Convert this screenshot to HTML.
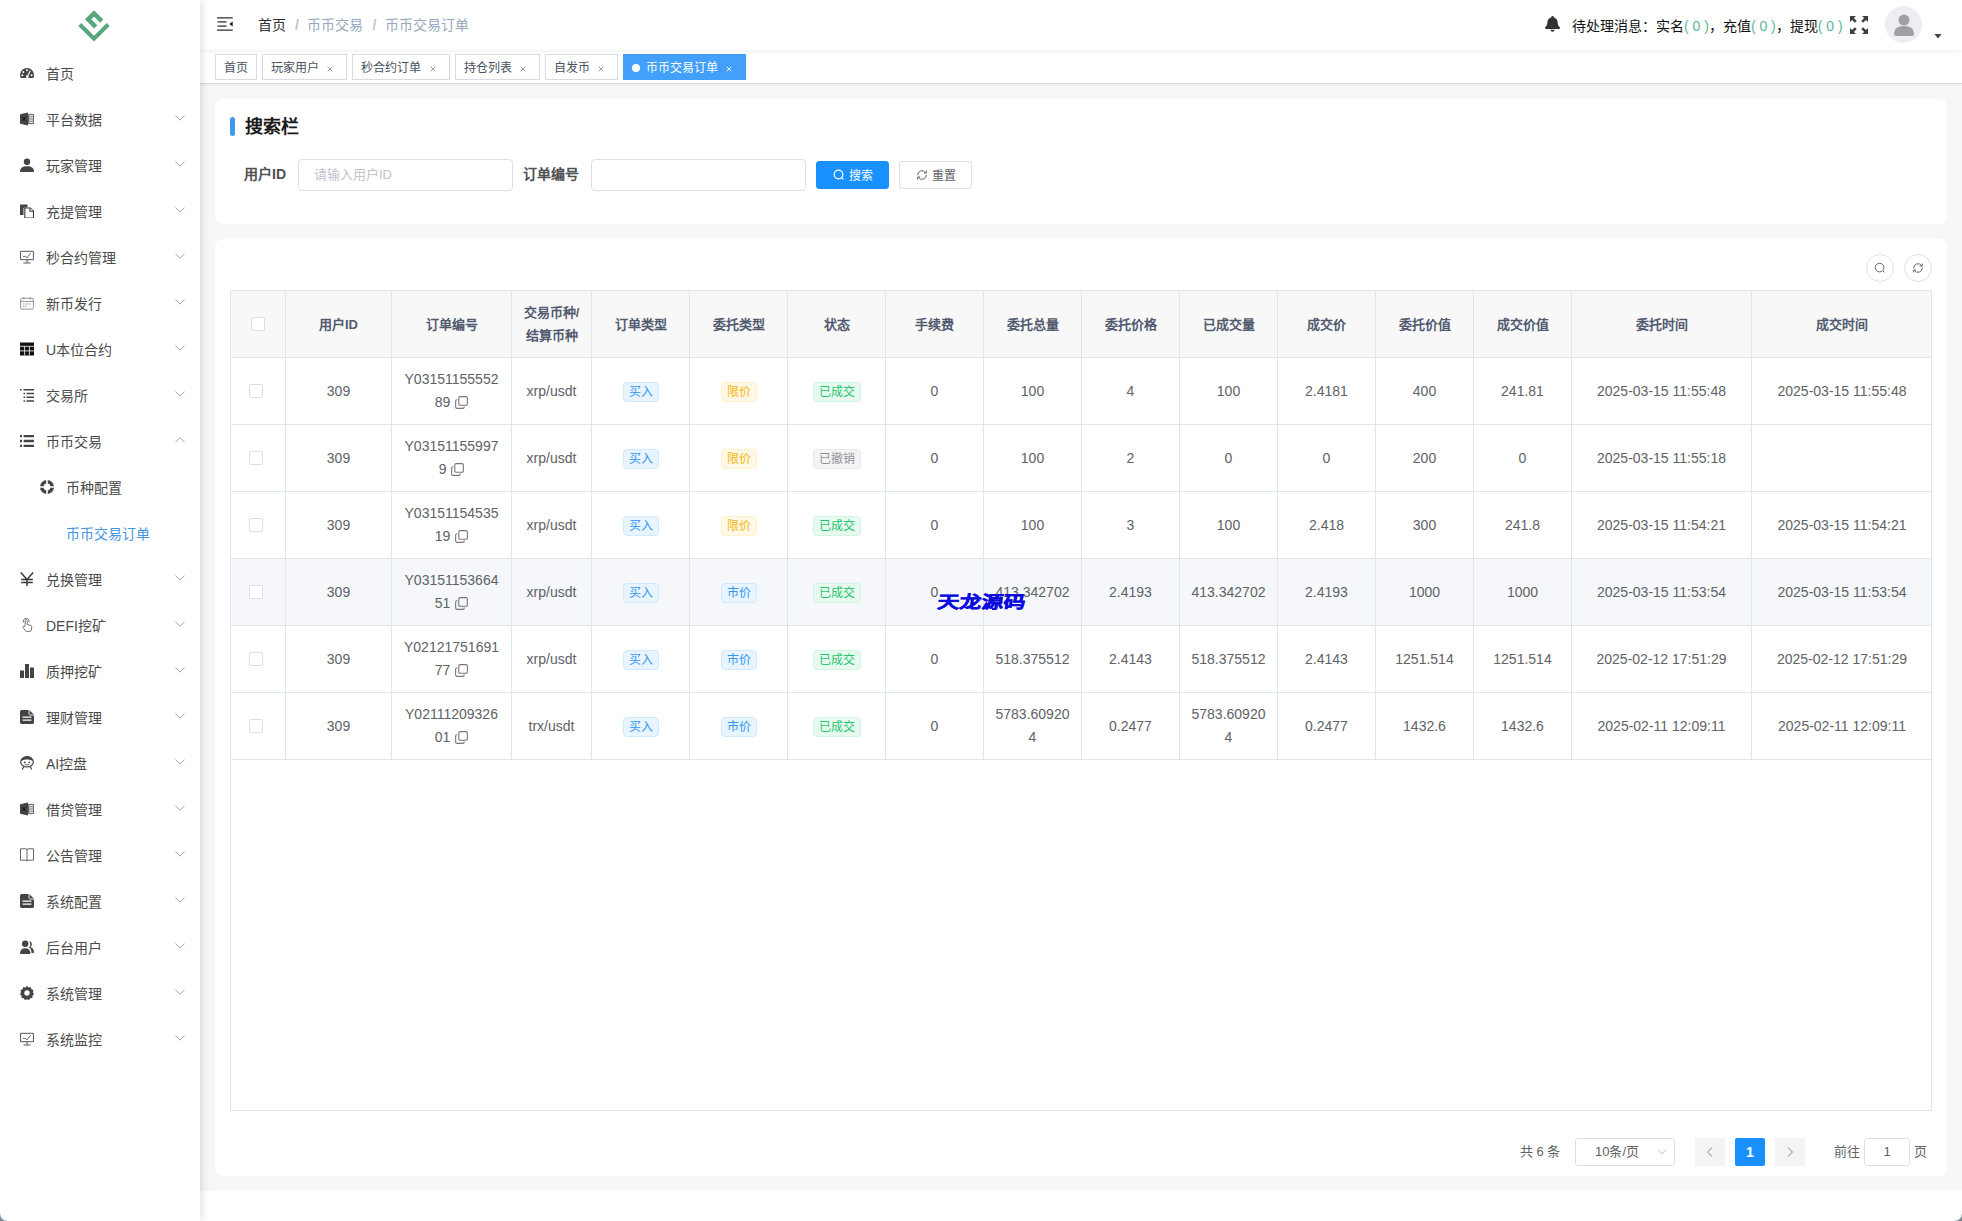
<!DOCTYPE html>
<html lang="zh-CN"><head><meta charset="utf-8"><title>币币交易订单</title>
<style>
*{box-sizing:border-box;margin:0;padding:0}
html,body{width:1962px;height:1221px;overflow:hidden;background:#fff;font-family:"Liberation Sans",sans-serif;font-size:14px;color:#606266}
.abs{position:absolute}
#side{position:absolute;left:0;top:0;width:200px;height:1221px;background:#fff;box-shadow:2px 0 8px rgba(0,21,41,.13);z-index:5}
#logo{position:absolute;left:70px;top:0;width:50px;height:50px}
.mi{position:absolute;left:0;width:200px;height:46px;line-height:46px;color:#4a4a4a;font-size:14px}
.mi svg.ic{position:absolute;left:20px;top:16px;width:14px;height:14px;fill:#444}
.mi span{position:absolute;left:46px;top:1px;white-space:nowrap}
.mi svg.ar{position:absolute;left:175px;top:18px;width:10px;height:8px;fill:none;stroke:#9da1a8;stroke-width:1}
.mi.sub svg.ic{left:40px}
.mi.sub span{left:66px}
#main{position:absolute;left:200px;top:0;width:1762px;height:1191px;background:#f7f7f7}
#nav{position:absolute;left:0;top:0;width:1762px;height:50px;background:#fff;box-shadow:0 1px 4px rgba(0,21,41,.08);z-index:2}
#nav .g{color:#5bb79a}
#tags{position:absolute;left:0;top:50px;width:1762px;height:34px;background:#fff;border-bottom:1px solid #d8dce5;box-shadow:0 1px 2px 0 rgba(0,0,0,.05)}
.tag{position:absolute;top:4px;height:26px;line-height:26px;border:1px solid #d8dce5;background:#fff;color:#495060;font-size:12px;padding-left:8px;white-space:nowrap}
.tag svg.x{position:absolute;right:13px;top:10.500px;width:6px;height:6px;stroke:#8a909c;stroke-width:.9;fill:none}
.tag.on{background:#42a0fb;border-color:#42a0fb;color:#fff;padding-left:22px}
.tag.on svg.x{stroke:#fff}
.tag .dot{position:absolute;left:8px;top:9px;width:8px;height:8px;border-radius:50%;background:#fff}
.card{position:absolute;background:#fff;border-radius:8px}
.lab{line-height:32px;font-size:14px;font-weight:bold;color:#4e5054;white-space:nowrap}
.inp{position:absolute;height:32px;border:1px solid #dcdfe6;border-radius:4px;background:#fff}
.inp .ph{position:absolute;left:15px;top:0;line-height:30px;font-size:13px;color:#c0c4cc;white-space:nowrap}
.btn{position:absolute;height:28px;border-radius:3px;font-size:12px;line-height:28px;white-space:nowrap}
.btn .bi{position:absolute;top:7px;width:12px;height:12px}
.circ{position:absolute;width:28px;height:28px;border:1px solid #dcdfe6;border-radius:50%;background:#fff}
.circ svg{position:absolute;left:7px;top:7px;width:12px;height:12px}
#tbw{position:absolute;left:15px;top:51px;width:1702px;height:821px;border:1px solid #dfe6ec;overflow:hidden}
#tb{border-collapse:collapse;table-layout:fixed;width:1701px;margin:-1px 0 0 -1px}
#tb th,#tb td{border:1px solid #dfe6ec;text-align:center;vertical-align:middle;height:67px;padding:0 2px;line-height:23px}
#tb th{background:#f8f8f9;color:#515a6e;font-size:13px;font-weight:bold}
#tb td{color:#606266;font-size:14px;background:#fff}
#tb tr.hv td{background:#f5f7fa}
.cb{display:inline-block;position:relative;top:-1px;width:14px;height:14px;border:1px solid #dcdfe6;border-radius:2px;background:#fff;vertical-align:middle}
.cb.r{left:-2px}
.cp{width:13px;height:13px;vertical-align:-2px;margin-left:1px}
.tg{display:inline-block;height:20px;line-height:18px;padding:0 5px;font-size:12px;border-radius:4px;border:1px solid;white-space:nowrap;vertical-align:middle}
.t-blue{background:#e8f4ff;border-color:#d1e9ff;color:#2f97f5}
.t-yel{background:#fff8e6;border-color:#fff1cc;color:#f5b612}
.t-grn{background:#e7faf0;border-color:#d0f5e0;color:#27c46f}
.t-gry{background:#f4f4f5;border-color:#e9e9eb;color:#909399}
.pg{line-height:28px;font-size:13px;color:#606266;white-space:nowrap}
.pb{width:30px;height:28px;border-radius:2px}
.pb svg{position:absolute;left:11px;top:8px;width:8px;height:12px}
.cnr{position:absolute;bottom:0;width:7px;height:7px;z-index:9}
</style></head><body>
<div id="main">
 <div id="nav">
<svg class="abs" style="left:17px;top:17px;width:16px;height:14px" viewBox="0 0 16 14"><path d="M.1.2h15.600v1.300H.1zM.6 4.300h9v1.300h-9zM.6 8.400h9v1.300h-9zM.1 12.500h15.600v1.300H.1z" fill="#2a2a2a"/><path d="M15.700 4.600v4.800L12.300 7z" fill="#1a1a1a"/></svg>
<div class="abs" style="left:58px;top:0;line-height:50px;font-size:14px;white-space:nowrap;color:#97a8be"><span style="color:#303133">首页</span><span style="margin:0 8.500px 0 9px;color:#c0c4cc;font-weight:bold">/</span><span>币币交易</span><span style="margin:0 8.500px 0 9px;color:#c0c4cc;font-weight:bold">/</span><span>币币交易订单</span></div>
<svg class="abs" style="left:1345px;top:16px;width:15px;height:16px" preserveAspectRatio="none" viewBox="0 0 15 17"><path d="M7.500 0c.7 0 1.200.5 1.200 1.200v.4c2.300.5 3.900 2.500 3.900 4.900 0 3.600 1.300 4.600 2 5.300.3.300.4.600.4.900 0 .6-.5 1-1 1H1c-.5 0-1-.4-1-1 0-.3.100-.6.400-.9.700-.7 2-1.700 2-5.300 0-2.400 1.600-4.400 3.900-4.900v-.4C6.300.5 6.800 0 7.500 0zM5.500 14.700h4a2 2 0 0 1-4 0z" fill="#333"/></svg>
<div class="abs" style="left:1372px;top:0;line-height:53px;font-size:14px;white-space:nowrap;color:#111">待处理消息：实名<span class="g">( 0 )</span>，充值<span class="g">( 0 )</span>，提现<span class="g">( 0 )</span></div>
<svg class="abs" style="left:1650px;top:16px;width:18px;height:18px" viewBox="0 0 18 18"><g fill="#3c4043"><path d="M0 0h6L3.900 2.100 6.700 4.900 4.900 6.700 2.100 3.900 0 6zM18 0v6l-2.100-2.100-2.800 2.800-1.800-1.800 2.800-2.800L12 0zM0 18v-6l2.100 2.100 2.800-2.800 1.800 1.800-2.800 2.800L6 18zM18 18h-6l2.100-2.100-2.800-2.800 1.800-1.800 2.800 2.800L18 12z"/></g></svg>
<div class="abs" style="left:1685px;top:6px;width:37px;height:37px;border-radius:50%;background:#efedf2;overflow:hidden"><svg style="position:absolute;left:8.500px;top:8px;width:20px;height:22px" viewBox="0 0 18 20"><circle cx="9" cy="5.500" r="5" fill="#a0a0a0"/><path d="M0 18.500c0-5 3-7.500 9-7.500s9 2.500 9 7.500c0 .8-.7 1.500-1.500 1.500h-15C.7 20 0 19.300 0 18.500z" fill="#a0a0a0"/></svg></div>
<svg class="abs" style="left:1734px;top:34px;width:8px;height:4.500px" viewBox="0 0 8 5"><path d="M0 0h8L4 5z" fill="#3d4450"/></svg>
 </div>
 <div id="tags">
<div class="tag" style="left:15px;width:42px">首页</div>
<div class="tag" style="left:62px;width:85px">玩家用户<svg class="x" viewBox="0 0 6 6"><path d="M.7.7l4.600 4.600M5.300.7L.7 5.300"/></svg></div>
<div class="tag" style="left:152px;width:98px">秒合约订单<svg class="x" viewBox="0 0 6 6"><path d="M.7.7l4.600 4.600M5.300.7L.7 5.300"/></svg></div>
<div class="tag" style="left:255px;width:85px">持仓列表<svg class="x" viewBox="0 0 6 6"><path d="M.7.7l4.600 4.600M5.300.7L.7 5.300"/></svg></div>
<div class="tag" style="left:345px;width:73px">自发币<svg class="x" viewBox="0 0 6 6"><path d="M.7.7l4.600 4.600M5.300.7L.7 5.300"/></svg></div>
<div class="tag on" style="left:423px;width:123px"><b class="dot"></b>币币交易订单<svg class="x" viewBox="0 0 6 6"><path d="M.7.7l4.600 4.600M5.300.7L.7 5.300"/></svg></div>
 </div>
<div class="card" style="left:15px;top:99px;width:1732px;height:125px">
<div class="abs" style="left:15px;top:18px;width:5px;height:19px;border-radius:3px;background:#3f97ee"></div>
<div class="abs" style="left:30px;top:14px;line-height:28px;font-size:18px;font-weight:bold;color:#1a1a1a">搜索栏</div>
<div class="abs lab" style="left:29px;top:59px">用户ID</div>
<div class="inp" style="left:83px;top:60px;width:215px"><span class="ph">请输入用户ID</span></div>
<div class="abs lab" style="left:308px;top:59px">订单编号</div>
<div class="inp" style="left:376px;top:60px;width:215px"></div>
<div class="btn" style="left:601px;top:62px;width:73px;background:#1890ff;color:#fff;border:1px solid #1890ff"><svg class="bi" style="left:16px" viewBox="0 0 12 12"><circle cx="5.500" cy="5.500" r="4.300" fill="none" stroke="#fff" stroke-width="1.300"/><path d="M8.600 8.600l1.800 1.800" stroke="#fff" stroke-width="1.300"/></svg><span style="position:absolute;left:32px">搜索</span></div>
<div class="btn" style="left:684px;top:62px;width:73px;background:#fff;color:#606266;border:1px solid #dcdfe6"><svg class="bi" style="left:16px" viewBox="0 0 12 12"><g fill="none" stroke="#666" stroke-width="1"><path d="M1.720 6.370A4.300 4.300 0 0 1 9.720 3.850"/><path d="M10.280 5.630A4.300 4.300 0 0 1 2.280 8.150"/><path d="M10.300 1.500V4H7.800M1.700 10.500V8h2.500"/></g></svg><span style="position:absolute;left:32px">重置</span></div>
</div>
<div class="card" style="left:15px;top:239px;width:1732px;height:937px">
<div class="circ" style="left:1651px;top:15px"><svg viewBox="0 0 12 12"><circle cx="5.600" cy="5.600" r="4.300" fill="none" stroke="#666" stroke-width="1"/><path d="M8.700 8.700l1.700 1.700" stroke="#666" stroke-width="1"/></svg></div>
<div class="circ" style="left:1689px;top:15px"><svg viewBox="0 0 12 12"><g fill="none" stroke="#666" stroke-width="1"><path d="M1.720 6.370A4.300 4.300 0 0 1 9.720 3.850"/><path d="M10.280 5.630A4.300 4.300 0 0 1 2.280 8.150"/><path d="M10.300 1.500V4H7.800M1.700 10.500V8h2.500"/></g></svg></div>
<div id="tbw"><table id="tb"><colgroup><col style="width:55px"><col style="width:106px"><col style="width:120px"><col style="width:80px"><col style="width:98px"><col style="width:98px"><col style="width:98px"><col style="width:98px"><col style="width:98px"><col style="width:98px"><col style="width:98px"><col style="width:98px"><col style="width:98px"><col style="width:98px"><col style="width:180px"><col style="width:181px"></colgroup>
<tr class="hd"><th><b class="cb"></b></th><th>用户ID</th><th>订单编号</th><th>交易币种/<br>结算币种</th><th>订单类型</th><th>委托类型</th><th>状态</th><th>手续费</th><th>委托总量</th><th>委托价格</th><th>已成交量</th><th>成交价</th><th>委托价值</th><th>成交价值</th><th>委托时间</th><th>成交时间</th></tr>
<tr><td><b class="cb r"></b></td><td>309</td><td>Y03151155552<br>89 <svg class="cp" viewBox="0 0 12 12"><rect x="3.500" y=".6" width="7.900" height="7.900" rx="1.200" fill="none" stroke="#777" stroke-width="1"/><path d="M2.200 3.500h-.4c-.7 0-1.200.5-1.200 1.200v5.500c0 .7.500 1.200 1.200 1.200h5.500c.7 0 1.200-.5 1.200-1.200v-.4" fill="none" stroke="#777" stroke-width="1"/></svg></td><td>xrp/usdt</td><td><span class="tg t-blue">买入</span></td><td><span class="tg t-yel">限价</span></td><td><span class="tg t-grn">已成交</span></td><td>0</td><td>100</td><td>4</td><td>100</td><td>2.4181</td><td>400</td><td>241.81</td><td>2025-03-15 11:55:48</td><td>2025-03-15 11:55:48</td></tr>
<tr><td><b class="cb r"></b></td><td>309</td><td>Y03151155997<br>9 <svg class="cp" viewBox="0 0 12 12"><rect x="3.500" y=".6" width="7.900" height="7.900" rx="1.200" fill="none" stroke="#777" stroke-width="1"/><path d="M2.200 3.500h-.4c-.7 0-1.200.5-1.200 1.200v5.500c0 .7.500 1.200 1.200 1.200h5.500c.7 0 1.200-.5 1.200-1.200v-.4" fill="none" stroke="#777" stroke-width="1"/></svg></td><td>xrp/usdt</td><td><span class="tg t-blue">买入</span></td><td><span class="tg t-yel">限价</span></td><td><span class="tg t-gry">已撤销</span></td><td>0</td><td>100</td><td>2</td><td>0</td><td>0</td><td>200</td><td>0</td><td>2025-03-15 11:55:18</td><td></td></tr>
<tr><td><b class="cb r"></b></td><td>309</td><td>Y03151154535<br>19 <svg class="cp" viewBox="0 0 12 12"><rect x="3.500" y=".6" width="7.900" height="7.900" rx="1.200" fill="none" stroke="#777" stroke-width="1"/><path d="M2.200 3.500h-.4c-.7 0-1.200.5-1.200 1.200v5.500c0 .7.500 1.200 1.200 1.200h5.500c.7 0 1.200-.5 1.200-1.200v-.4" fill="none" stroke="#777" stroke-width="1"/></svg></td><td>xrp/usdt</td><td><span class="tg t-blue">买入</span></td><td><span class="tg t-yel">限价</span></td><td><span class="tg t-grn">已成交</span></td><td>0</td><td>100</td><td>3</td><td>100</td><td>2.418</td><td>300</td><td>241.8</td><td>2025-03-15 11:54:21</td><td>2025-03-15 11:54:21</td></tr>
<tr class="hv"><td><b class="cb r"></b></td><td>309</td><td>Y03151153664<br>51 <svg class="cp" viewBox="0 0 12 12"><rect x="3.500" y=".6" width="7.900" height="7.900" rx="1.200" fill="none" stroke="#777" stroke-width="1"/><path d="M2.200 3.500h-.4c-.7 0-1.200.5-1.200 1.200v5.500c0 .7.500 1.200 1.200 1.200h5.500c.7 0 1.200-.5 1.200-1.200v-.4" fill="none" stroke="#777" stroke-width="1"/></svg></td><td>xrp/usdt</td><td><span class="tg t-blue">买入</span></td><td><span class="tg t-blue">市价</span></td><td><span class="tg t-grn">已成交</span></td><td>0</td><td>413.342702</td><td>2.4193</td><td>413.342702</td><td>2.4193</td><td>1000</td><td>1000</td><td>2025-03-15 11:53:54</td><td>2025-03-15 11:53:54</td></tr>
<tr><td><b class="cb r"></b></td><td>309</td><td>Y02121751691<br>77 <svg class="cp" viewBox="0 0 12 12"><rect x="3.500" y=".6" width="7.900" height="7.900" rx="1.200" fill="none" stroke="#777" stroke-width="1"/><path d="M2.200 3.500h-.4c-.7 0-1.200.5-1.200 1.200v5.500c0 .7.500 1.200 1.200 1.200h5.500c.7 0 1.200-.5 1.200-1.200v-.4" fill="none" stroke="#777" stroke-width="1"/></svg></td><td>xrp/usdt</td><td><span class="tg t-blue">买入</span></td><td><span class="tg t-blue">市价</span></td><td><span class="tg t-grn">已成交</span></td><td>0</td><td>518.375512</td><td>2.4143</td><td>518.375512</td><td>2.4143</td><td>1251.514</td><td>1251.514</td><td>2025-02-12 17:51:29</td><td>2025-02-12 17:51:29</td></tr>
<tr><td><b class="cb r"></b></td><td>309</td><td>Y02111209326<br>01 <svg class="cp" viewBox="0 0 12 12"><rect x="3.500" y=".6" width="7.900" height="7.900" rx="1.200" fill="none" stroke="#777" stroke-width="1"/><path d="M2.200 3.500h-.4c-.7 0-1.200.5-1.200 1.200v5.500c0 .7.500 1.200 1.200 1.200h5.500c.7 0 1.200-.5 1.200-1.200v-.4" fill="none" stroke="#777" stroke-width="1"/></svg></td><td>trx/usdt</td><td><span class="tg t-blue">买入</span></td><td><span class="tg t-blue">市价</span></td><td><span class="tg t-grn">已成交</span></td><td>0</td><td>5783.60920<br>4</td><td>0.2477</td><td>5783.60920<br>4</td><td>0.2477</td><td>1432.6</td><td>1432.6</td><td>2025-02-11 12:09:11</td><td>2025-02-11 12:09:11</td></tr>
</table></div>
<div class="abs pg" style="left:1305px;top:899px">共 6 条</div>
<div class="abs" style="left:1360px;top:899px;width:100px;height:28px;border:1px solid #dcdfe6;border-radius:3px;background:#fff"><span class="abs" style="left:19px;top:0;line-height:26px;font-size:13px;color:#606266;white-space:nowrap">10条/页</span><svg class="abs" style="left:81px;top:10px;width:10px;height:7px" viewBox="0 0 10 7"><path d="M1 1l4 4 4-4" fill="none" stroke="#c0c4cc" stroke-width="1"/></svg></div>
<div class="abs pb" style="left:1480px;top:899px;background:#f4f4f5"><svg viewBox="0 0 8 12"><path d="M6 1.500L1.800 6 6 10.500" fill="none" stroke="#b9bdc5" stroke-width="1.700"/></svg></div>
<div class="abs pb" style="left:1520px;top:899px;background:#1890ff;color:#fff;font-weight:bold;font-size:14px;text-align:center;line-height:28px">1</div>
<div class="abs pb" style="left:1560px;top:899px;background:#f4f4f5"><svg viewBox="0 0 8 12"><path d="M2 1.500L6.200 6 2 10.500" fill="none" stroke="#b9bdc5" stroke-width="1.700"/></svg></div>
<div class="abs pg" style="left:1619px;top:899px">前往</div>
<div class="abs" style="left:1649px;top:899px;width:46px;height:28px;border:1px solid #dcdfe6;border-radius:3px;background:#fff;text-align:center;line-height:26px;font-size:13px;color:#606266">1</div>
<div class="abs pg" style="left:1699px;top:899px">页</div>
</div>
<div class="abs" style="left:738px;top:591px;font-size:18px;line-height:22px;font-weight:900;color:#0c0cdc;-webkit-text-stroke:.5px #0c0cdc;white-space:nowrap;z-index:3;transform-origin:0 50%;transform:scale(1.210,.95) skewX(-5deg)">天龙源码</div>
</div>
<div class="cnr" style="left:0;background:radial-gradient(circle at 100% 0,rgba(120,134,148,0) 6px,#7b8894 7.500px)"></div>
<div class="cnr" style="right:0;background:radial-gradient(circle at 0 0,rgba(120,134,148,0) 6px,#7b8894 7.500px)"></div>
<div id="side">
<svg id="logo" viewBox="70 0 50 50"><g fill="none" stroke="#58a67c" stroke-linejoin="miter"><path d="M101.750 21.150L94 13.400 88.150 19.250 95.700 26.800" stroke-width="4.500"/><path d="M79.770 24.480L94 38.700 108.230 24.480" stroke-width="4.100"/></g></svg>
<div class="mi" style="top:50px;"><svg class="ic" viewBox="0 0 14 14"><path d="M7 2A7 7 0 0 0 0 9c0 1.2.3 2.2.8 3h12.4c.5-.8.8-1.800.8-3a7 7 0 0 0-7-7z"/><g fill="#fff"><circle cx="3.300" cy="6" r="1"/><circle cx="2.400" cy="9.300" r="1"/><circle cx="7" cy="4.200" r="1"/><circle cx="11.600" cy="9.300" r="1"/><path d="M9.800 4.500l1 .5-2.300 4.600a1.400 1.400 0 1 1-1-.5z"/></g></svg><span>首页</span></div>
<div class="mi" style="top:96px;"><svg class="ic" viewBox="0 0 14 14"><path d="M0 2.200L8 .4v13.200L0 11.800z"/><path d="M8.600 2.400h5v9.200h-5z" fill="none" stroke="#4a4a4a" stroke-width=".9"/><path d="M9 4.300h4M9 6.100h4M9 7.900h4M9 9.700h4" stroke="#777" stroke-width=".9"/><path d="M2.600 5.200l2.800 3.600M5.400 5.200L2.600 8.800" stroke="#111" stroke-width="1"/></svg><span>平台数据</span><svg class="ar" viewBox="0 0 10 8"><path d="M.4 1.600L5 6.200l4.600-4.600"/></svg></div>
<div class="mi" style="top:142px;"><svg class="ic" viewBox="0 0 14 14"><circle cx="7" cy="3.800" r="3.200"/><path d="M0 13.500c0-3.600 2.600-5.300 7-5.300s7 1.700 7 5.300c0 .3-.2.500-.5.500h-13c-.3 0-.5-.2-.5-.5z"/></svg><span>玩家管理</span><svg class="ar" viewBox="0 0 10 8"><path d="M.4 1.600L5 6.200l4.600-4.600"/></svg></div>
<div class="mi" style="top:188px;"><svg class="ic" viewBox="0 0 14 14"><path d="M0 .5h7.500v3H4.300c-.5 0-.8.300-.8.800V11H0z"/><path d="M4.800 4h5.200v3.200h3.500V14H4.800z" fill="none" stroke="#3a3a3a" stroke-width="1.100"/><path d="M10.300 3.700l3.400 3.400" stroke="#3a3a3a" stroke-width="1"/></svg><span>充提管理</span><svg class="ar" viewBox="0 0 10 8"><path d="M.4 1.600L5 6.200l4.600-4.600"/></svg></div>
<div class="mi" style="top:234px;"><svg class="ic" viewBox="0 0 14 14"><path d="M.6 1.300h12.800v8.400H.6z" fill="none" stroke="#555" stroke-width="1"/><path d="M7 9.700v3M3.500 13h7" stroke="#555" stroke-width="1" fill="none"/><path d="M3 6.500l2.200-.2L7 7.800l3.600-4.600" stroke="#555" stroke-width=".9" fill="none"/></svg><span>秒合约管理</span><svg class="ar" viewBox="0 0 10 8"><path d="M.4 1.600L5 6.200l4.600-4.600"/></svg></div>
<div class="mi" style="top:280px;"><svg class="ic" viewBox="0 0 14 14"><rect x=".6" y="2.300" width="12.800" height="10.800" rx="1.500" fill="none" stroke="#888" stroke-width=".9"/><path d="M.6 5.400h12.800M3.800 1v2.400M10.200 1v2.400" stroke="#888" stroke-width=".9"/><path d="M3 8h8M3 10.300h4" stroke="#999" stroke-width="1.100" stroke-dasharray="1.400 .7"/></svg><span>新币发行</span><svg class="ar" viewBox="0 0 10 8"><path d="M.4 1.600L5 6.200l4.600-4.600"/></svg></div>
<div class="mi" style="top:326px;"><svg class="ic" viewBox="0 0 14 14"><path d="M0 .5h14v13H0z" fill="#111"/><path d="M0 4.300h14M0 8.900h14M4.600 4.300v9.200M9.400 4.300v9.200" stroke="#fff" stroke-width=".8"/></svg><span>U本位合约</span><svg class="ar" viewBox="0 0 10 8"><path d="M.4 1.600L5 6.200l4.600-4.600"/></svg></div>
<div class="mi" style="top:372px;"><svg class="ic" viewBox="0 0 14 14"><path d="M3.500 1h10.500v1.500H3.500zM6.500 4.800H14v1.500H6.500zM6.500 8.600H14v1.500H6.500zM6.500 12.300H14v1.500H6.500z"/><path d="M0 1h1.600v1.500H0zM3.500 4.800h1.600v1.500H3.500zM3.500 8.600h1.600v1.500H3.500zM3.500 12.300h1.600v1.500H3.500z"/></svg><span>交易所</span><svg class="ar" viewBox="0 0 10 8"><path d="M.4 1.600L5 6.200l4.600-4.600"/></svg></div>
<div class="mi" style="top:418px;"><svg class="ic" viewBox="0 0 14 14"><path d="M3.600 .9H14v2.400H3.600zM3.600 5.800H14v2.400H3.600zM3.600 10.700H14v2.400H3.600z"/><path d="M0 .9h2v2.400H0zM0 5.800h2v2.400H0zM0 10.700h2v2.400H0z"/></svg><span>币币交易</span><svg class="ar" viewBox="0 0 10 8"><path d="M.4 6.200L5 1.600l4.600 4.600"/></svg></div>
<div class="mi sub" style="top:464px;"><svg class="ic" viewBox="0 0 14 14"><path d="M7 0a7 7 0 1 0 0 14A7 7 0 0 0 7 0zm0 3.600a3.400 3.400 0 1 1 0 6.800 3.400 3.400 0 0 1 0-6.800z" fill-rule="evenodd"/><path d="M7 0v4M7 10v4M0 7h4M10 7h4" stroke="#fff" stroke-width="1.600"/></svg><span>币种配置</span></div>
<div class="mi sub" style="top:510px;color:#4595e0;"><span>币币交易订单</span></div>
<div class="mi" style="top:556px;"><svg class="ic" viewBox="0 0 14 14"><g fill="none" stroke="#3a3a3a" stroke-width="1.500"><path d="M.8.6L7 7.400 13.200.6M7 7.200V14M1.200 7.500h11.600M1.200 10.600h11.600"/></g></svg><span>兑换管理</span><svg class="ar" viewBox="0 0 10 8"><path d="M.4 1.600L5 6.200l4.600-4.600"/></svg></div>
<div class="mi" style="top:602px;"><svg class="ic" viewBox="0 0 14 14"><g fill="none" stroke="#666" stroke-width=".9"><path d="M5.200 6.500V2.600a1 1 0 0 1 2 0v4l3.600.8c.7.200 1 .7 1 1.300l-.5 3.500c-.1.700-.6 1.200-1.300 1.200H6.600c-.5 0-1-.3-1.300-.7L3 9.400c-.3-.5 0-1 .4-1.200.5-.2 1 0 1.300.4z"/><path d="M3.600 4.500A2.900 2.900 0 0 1 6.200.3a2.900 2.900 0 0 1 2.700 4"/></g></svg><span>DEFI挖矿</span><svg class="ar" viewBox="0 0 10 8"><path d="M.4 1.600L5 6.200l4.600-4.600"/></svg></div>
<div class="mi" style="top:648px;"><svg class="ic" viewBox="0 0 14 14"><path d="M0 6.500h4v7.500H0zM5 0h4v14H5zM10 3.500h4V14h-4z"/></svg><span>质押挖矿</span><svg class="ar" viewBox="0 0 10 8"><path d="M.4 1.600L5 6.200l4.600-4.600"/></svg></div>
<div class="mi" style="top:694px;"><svg class="ic" viewBox="0 0 14 14"><path d="M1.800 0h7.400L14 4.800v7.400c0 1-.8 1.800-1.800 1.800H1.800C.8 14 0 13.200 0 12.200V1.800C0 .8.800 0 1.800 0z"/><path d="M2.500 7.200h9M2.500 10.200h9" stroke="#fff" stroke-width="1.300"/><path d="M9 0v3.600c0 .8.600 1.400 1.400 1.400H14" stroke="#fff" stroke-width=".9" fill="none"/></svg><span>理财管理</span><svg class="ar" viewBox="0 0 10 8"><path d="M.4 1.600L5 6.200l4.600-4.600"/></svg></div>
<div class="mi" style="top:740px;"><svg class="ic" viewBox="0 0 14 14"><g fill="none" stroke="#4a4a4a" stroke-width="1.200"><ellipse cx="7" cy="5.800" rx="6.300" ry="5.200"/><path d="M3.800 10.300l-1.500 3.200M10.200 10.300l1.500 3.200"/><path d="M5 8.300c.6.5 1.300.7 2 .7s1.400-.2 2-.7" stroke-width=".9"/></g><path d="M.9 5.200C1.500 2.200 4 .6 7 .6s5.500 1.600 6.100 4.600C11.500 4.100 9.400 3.600 7 3.600s-4.500.5-6.100 1.600z" fill="#444"/><circle cx="4.700" cy="6.400" r=".9"/><circle cx="9.300" cy="6.400" r=".9"/></svg><span>AI控盘</span><svg class="ar" viewBox="0 0 10 8"><path d="M.4 1.600L5 6.200l4.600-4.600"/></svg></div>
<div class="mi" style="top:786px;"><svg class="ic" viewBox="0 0 14 14"><path d="M0 2.200L8 .4v13.200L0 11.800z"/><path d="M8.600 2.400h5v9.200h-5z" fill="none" stroke="#4a4a4a" stroke-width=".9"/><path d="M9 4.300h4M9 6.100h4M9 7.900h4M9 9.700h4" stroke="#777" stroke-width=".9"/><path d="M2.600 5.200l2.800 3.600M5.400 5.200L2.600 8.800" stroke="#111" stroke-width="1"/></svg><span>借贷管理</span><svg class="ar" viewBox="0 0 10 8"><path d="M.4 1.600L5 6.200l4.600-4.600"/></svg></div>
<div class="mi" style="top:832px;"><svg class="ic" viewBox="0 0 14 14"><path d="M.5 .8h5.300c.7 0 1.200.5 1.200 1.200 0-.7.500-1.200 1.200-1.200h5.300v11.400H8.200c-.7 0-1.200.4-1.200 1 0-.6-.5-1-1.200-1H.5zM7 2v11" fill="none" stroke="#555" stroke-width=".9"/></svg><span>公告管理</span><svg class="ar" viewBox="0 0 10 8"><path d="M.4 1.600L5 6.200l4.600-4.600"/></svg></div>
<div class="mi" style="top:878px;"><svg class="ic" viewBox="0 0 14 14"><path d="M1.800 0h7.400L14 4.800v7.400c0 1-.8 1.800-1.800 1.800H1.800C.8 14 0 13.200 0 12.200V1.800C0 .8.800 0 1.800 0z"/><path d="M2.500 7.200h9M2.500 10.200h9" stroke="#fff" stroke-width="1.300"/><path d="M9 0v3.600c0 .8.600 1.400 1.400 1.400H14" stroke="#fff" stroke-width=".9" fill="none"/></svg><span>系统配置</span><svg class="ar" viewBox="0 0 10 8"><path d="M.4 1.600L5 6.200l4.600-4.600"/></svg></div>
<div class="mi" style="top:924px;"><svg class="ic" viewBox="0 0 14 14"><circle cx="5.200" cy="3.700" r="3.200"/><path d="M0 13.300c0-3.300 2-5.100 5.200-5.100s5.200 1.800 5.200 5.100c0 .4-.2.700-.6.700H.6c-.4 0-.6-.3-.6-.7z"/><path d="M9.200 1.200c1.600.2 2.700 1.400 2.700 3 0 1.200-.6 2.200-1.600 2.700 2.300.6 3.700 2.400 3.700 5.600 0 .3-.2.500-.5.500h-2c0-3-1-4.800-2.700-5.700 1-.7 1.500-1.700 1.500-3 0-1.200-.4-2.300-1.100-3.100z"/></svg><span>后台用户</span><svg class="ar" viewBox="0 0 10 8"><path d="M.4 1.600L5 6.200l4.600-4.600"/></svg></div>
<div class="mi" style="top:970px;"><svg class="ic" viewBox="0 0 14 14"><path d="M7 0l1.600 1.500 2.200-.3.700 2.100 2 .9-.6 2.100 1.100 1.900-1.600 1.500v2.200l-2.200.4-1.200 1.800L7 13.300 5 14.100l-1.200-1.800-2.200-.4V9.700L0 8.200l1.100-1.900-.6-2.100 2-.9.700-2.100 2.200.3z"/><circle cx="7" cy="7" r="2.700" fill="#fff"/></svg><span>系统管理</span><svg class="ar" viewBox="0 0 10 8"><path d="M.4 1.600L5 6.200l4.600-4.600"/></svg></div>
<div class="mi" style="top:1016px;"><svg class="ic" viewBox="0 0 14 14"><path d="M.6 1.300h12.800v8.400H.6z" fill="none" stroke="#555" stroke-width="1"/><path d="M7 9.700v3M3.500 13h7" stroke="#555" stroke-width="1" fill="none"/><path d="M3 6.500l2.200-.2L7 7.800l3.600-4.600" stroke="#555" stroke-width=".9" fill="none"/></svg><span>系统监控</span><svg class="ar" viewBox="0 0 10 8"><path d="M.4 1.600L5 6.200l4.600-4.600"/></svg></div>
</div>
</body></html>
